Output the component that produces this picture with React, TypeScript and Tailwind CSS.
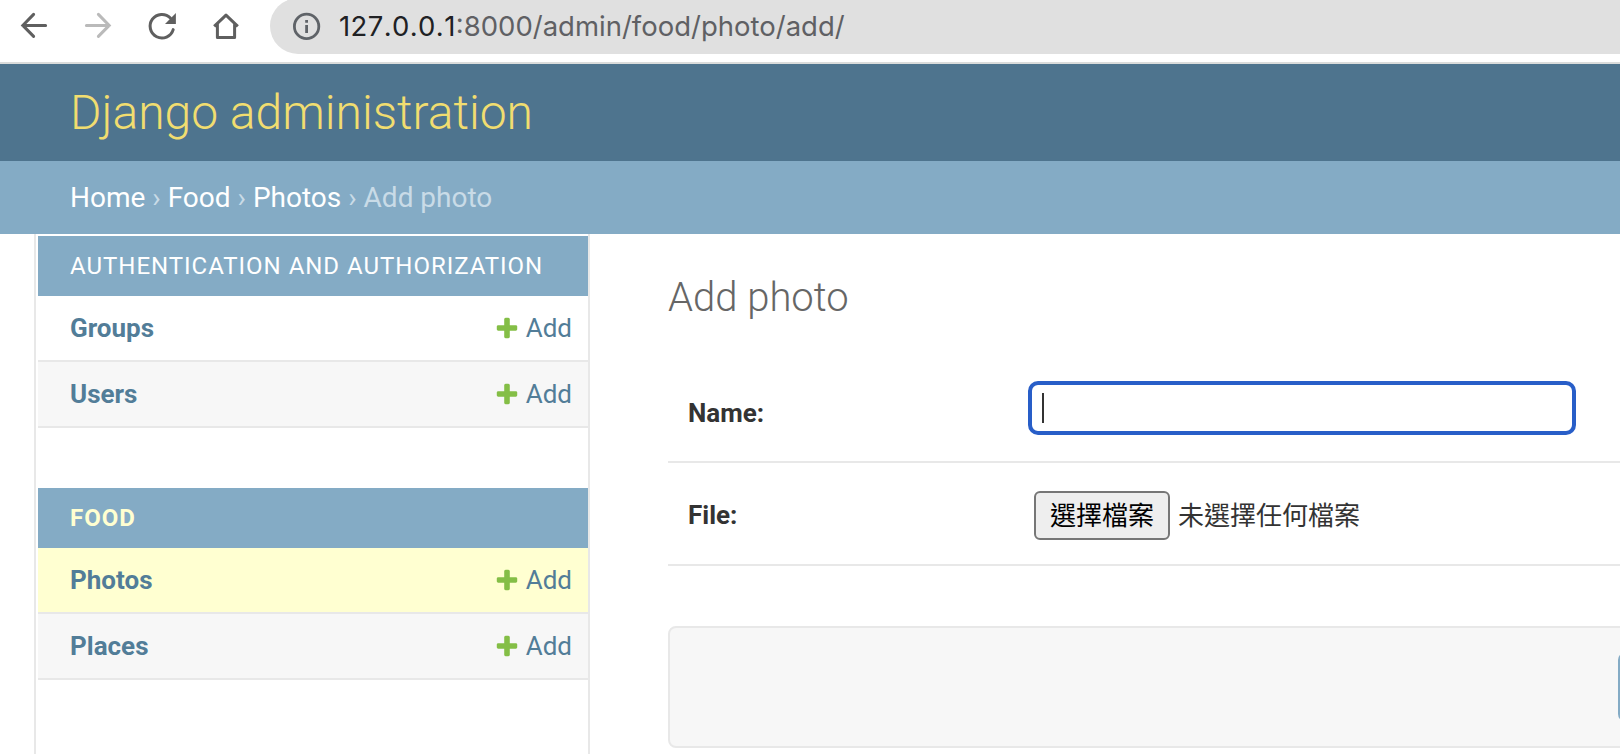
import type { ReactNode } from "react";

function ToolIcon({ children, faded = false }: { children: ReactNode; faded?: boolean }) {
  return (
    <svg
      viewBox="0 0 32 32"
      className={faded ? "size-8 shrink-0 text-[#bababa]" : "size-8 shrink-0 text-[#5f5f5f]"}
      fill="none"
      stroke="currentColor"
      strokeWidth="3"
    >
      {children}
    </svg>
  );
}

function BrowserBar() {
  return (
    <div className="flex h-16 items-start overflow-hidden border-b-2 border-[#dadcdb] bg-white pl-[18px]">
      <div className="flex gap-8 pt-[9px]">
        <ToolIcon>
          <path d="M27.6 16.4H5M15.6 5.4L4.8 16.4L15.6 27.4" strokeLinecap="round" />
        </ToolIcon>
        <ToolIcon faded>
          <path d="M4.4 16.4H27M16.4 5.4L27.2 16.4L16.4 27.4" strokeLinecap="round" />
        </ToolIcon>
        <ToolIcon>
          <path d="M27.2 20.6A11.8 11.8 0 1 1 24.4 9" strokeLinecap="round" />
          <path d="M29.9 4V15H19Z" fill="currentColor" stroke="none" />
        </ToolIcon>
        <ToolIcon>
          <path d="M4.2 17.4L16 6.2L27.8 17.4M7.4 15V28.4H24.6V15" strokeLinejoin="round" />
        </ToolIcon>
      </div>
      <div className="-mt-0.5 ml-7 flex h-14 flex-1 items-center rounded-l-full bg-[#e0e0e0] pl-[21px]">
        <svg viewBox="0 0 32 32" className="size-8 shrink-0" fill="none" stroke="#5f6368" strokeWidth="2.8">
          <circle cx="15.6" cy="16.4" r="12.2" />
          <path d="M15.6 15V23M15.6 10V12.8" />
        </svg>
        <span className="ml-4 flex whitespace-pre font-[Inter,sans-serif] text-[27.5px] leading-8 text-[#5f6064]">
          <span className="tracking-[0.4px] text-[#202124] [font-kerning:none]">127.0.0.1</span>
          <span>:8000/admin/food/photo/add/</span>
        </span>
      </div>
    </div>
  );
}

function AddLink() {
  return (
    <a className="flex items-center text-[26px] text-[#527d98]">
      <svg viewBox="0 0 1792 1792" className="mr-1.5 size-[26px]" fill="#84be46">
        <path d="M1600 796v192q0 40-28 68t-68 28h-416v416q0 40-28 68t-68 28h-192q-40 0-68-28t-28-68v-416h-416q-40 0-68-28t-28-68v-192q0-40 28-68t68-28h416v-416q0-40 28-68t68-28h192q40 0 68 28t28 68v416h416q40 0 68 28t28 68z" />
      </svg>
      Add
    </a>
  );
}

const rowTone = {
  plain: "bg-white",
  striped: "bg-[#f7f7f7]",
  current: "bg-[#ffffd1]",
};

function ModelRow({ name, tone }: { name: string; tone: keyof typeof rowTone }) {
  return (
    <div className={`flex h-[66px] items-center justify-between border-b-2 border-[#e8e8e8] pr-4 pl-8 ${rowTone[tone]}`}>
      <span className="text-[26px] font-bold text-[#527d98]">{name}</span>
      <AddLink />
    </div>
  );
}

export default function App() {
  return (
    <div className="flex h-[754px] w-[1620px] flex-col overflow-hidden bg-white font-[Roboto,'Noto_Sans_CJK_TC',sans-serif]">
      <BrowserBar />
      <header className="flex h-[97px] items-center bg-[#4e748e] pl-[70px]">
        <h1 className="text-[48px] font-light text-[#f1dd70]">Django administration</h1>
      </header>
      <nav className="flex h-[73px] items-center bg-[#84abc5] pl-[70px] text-[28px] text-[#c9dbe7]">
        <span className="whitespace-pre">
          <a className="text-white">Home</a> › <a className="text-white">Food</a> › <a className="text-white">Photos</a> › Add photo
        </span>
      </nav>
      <div className="flex min-h-0 flex-1">
        <aside className="ml-[34px] w-[556px] border-x-2 border-[#e8e8e8] pt-0.5 pl-0.5">
          <h2 className="flex h-[60px] items-center bg-[#84abc5] pl-8 text-[24px] tracking-[0.98px] text-white">
            AUTHENTICATION AND AUTHORIZATION
          </h2>
          <ModelRow name="Groups" tone="plain" />
          <ModelRow name="Users" tone="striped" />
          <h2 className="mt-[60px] flex h-[60px] items-center bg-[#84abc5] pl-8 text-[24px] font-bold tracking-[0.98px] text-[#ffffd1]">
            FOOD
          </h2>
          <ModelRow name="Photos" tone="current" />
          <ModelRow name="Places" tone="striped" />
        </aside>
        <main className="ml-[78px] flex-1">
          <h2 className="pt-10 text-[40px] leading-[47px] font-light text-[#666]">Add photo</h2>
          <div className="mt-[40px] flex h-[102px] items-start border-b-2 border-[#e8e8e8] pt-5 pl-5">
            <label className="w-[340px] pt-[17px] text-[26px] leading-[30px] font-bold text-[#333]">Name:</label>
            <div className="flex h-[54px] w-[548px] items-start rounded-[10px] border-4 border-[#285ec8] bg-white pt-2 pl-2.5">
              <div className="h-[30px] w-0.5 bg-[#333]" />
            </div>
          </div>
          <div className="flex h-[103px] items-start border-b-2 border-[#e8e8e8] pl-5">
            <label className="w-[346px] pt-9 text-[26px] leading-[32px] font-bold text-[#333]">File:</label>
            <button className="mt-7 h-[49px] w-[136px] rounded-[6px] border-2 border-[#767676] bg-[#eee] pt-px text-[26px] leading-[44px] text-black">
              選擇檔案
            </button>
            <span className="mt-[31px] ml-2 text-[26px] leading-[45px] text-[#333]">未選擇任何檔案</span>
          </div>
          <div className="-mr-4 mt-[60px] flex h-[122px] justify-end overflow-hidden rounded-[8px] border-2 border-[#e8e8e8] bg-[#f7f7f7] pt-6">
            <div className="h-[70px] w-4 rounded-l-[8px] bg-[#84abc5]" />
          </div>
        </main>
      </div>
    </div>
  );
}
